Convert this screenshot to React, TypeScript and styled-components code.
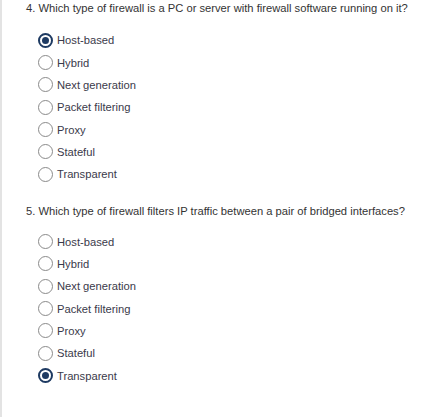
import React, { useState } from 'react';
import styled, { createGlobalStyle } from 'styled-components';

const GlobalStyle = createGlobalStyle`
  html, body {
    margin: 0;
    padding: 0;
    background: #ffffff;
  }
  body {
    font-family: 'Liberation Sans', Arial, sans-serif;
  }
`;

const Page = styled.div`
  min-height: 417px;
  border-left: 2px solid #e3e3e3;
  padding: 2px 0 0 24px;
  box-sizing: border-box;
`;

const Question = styled.section<{ $top: number }>`
  margin-top: ${({ $top }) => $top}px;
`;

const Prompt = styled.p`
  margin: 0;
  font-size: 11.2px;
  line-height: 13px;
  color: #333333;
`;

const Options = styled.div<{ $gap: number }>`
  display: flex;
  flex-direction: column;
  padding-left: 12px;
  margin-top: ${({ $gap }) => $gap}px;
`;

const OptionRow = styled.label`
  display: flex;
  align-items: center;
  height: 22.35px;
  font-size: 11.2px;
  color: #3a3a4a;
  cursor: pointer;
`;

const Radio = styled.span<{ $checked: boolean }>`
  box-sizing: border-box;
  width: 15px;
  height: 15px;
  border-radius: 50%;
  border: ${({ $checked }) => ($checked ? '2px solid #1e3a62' : '1px solid #8a8a8a')};
  margin-right: 4px;
  display: flex;
  align-items: center;
  justify-content: center;
  flex-shrink: 0;

  &::after {
    content: '';
    display: ${({ $checked }) => ($checked ? 'block' : 'none')};
    width: 7px;
    height: 7px;
    border-radius: 50%;
    background: #1e3a62;
  }
`;

const choices = [
  'Host-based',
  'Hybrid',
  'Next generation',
  'Packet filtering',
  'Proxy',
  'Stateful',
  'Transparent',
];

const questions = [
  {
    id: 4,
    text: 'Which type of firewall is a PC or server with firewall software running on it?',
    answer: 'Host-based',
    top: 0,
    gap: 14,
  },
  {
    id: 5,
    text: 'Which type of firewall filters IP traffic between a pair of bridged interfaces?',
    answer: 'Transparent',
    top: 20,
    gap: 12,
  },
];

export default function App() {
  const [answers, setAnswers] = useState<Record<number, string>>(
    Object.fromEntries(questions.map((q) => [q.id, q.answer]))
  );

  return (
    <>
      <GlobalStyle />
      <Page>
        {questions.map((q) => (
          <Question key={q.id} $top={q.top}>
            <Prompt>
              {q.id}. {q.text}
            </Prompt>
            <Options $gap={q.gap}>
              {choices.map((c) => (
                <OptionRow key={c} onClick={() => setAnswers({ ...answers, [q.id]: c })}>
                  <Radio $checked={answers[q.id] === c} />
                  {c}
                </OptionRow>
              ))}
            </Options>
          </Question>
        ))}
      </Page>
    </>
  );
}
